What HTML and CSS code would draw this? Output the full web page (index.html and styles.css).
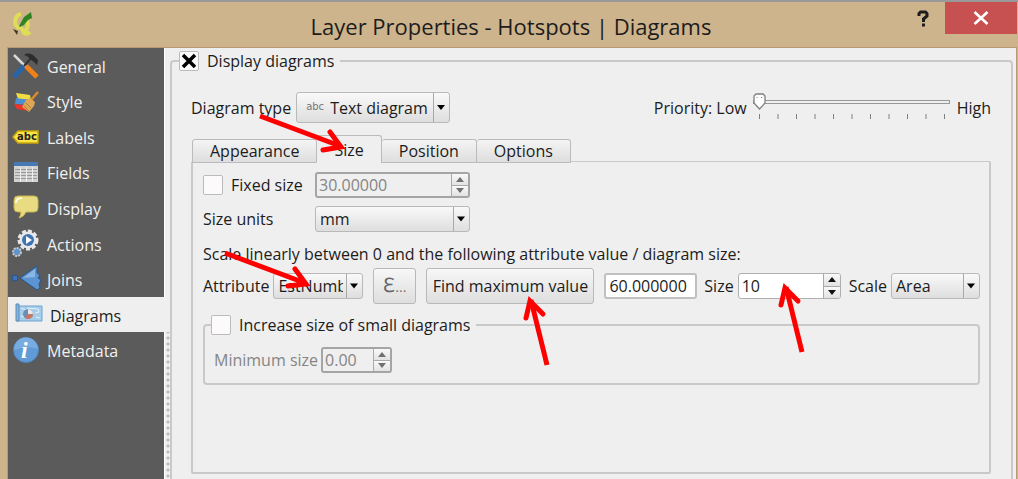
FILE: index.html
```html
<!DOCTYPE html>
<html lang="en">
<head>
  <meta charset="utf-8">
  <title>Layer Properties - Hotspots | Diagrams</title>
  <link rel="stylesheet" href="styles.css">
</head>
<body>
  <div class="window">
    <header class="titlebar">
      <svg class="logo" width="22" height="26" viewBox="0 0 22 26">
        <path d="M9 3C4 4 2 9 4 15M15 10c2 4 0 9-3 11M4 17c4-2 6 0 7 3 1 3 4 4 7 1" fill="none" stroke="#dfdc55" stroke-width="4"/>
        <path d="m7 15 5-9 7-5 1 6-4 2-4 5-4 2z" fill="#2f8420"/>
        <path d="m1 18 5 2-1 4z" fill="#3a3a24"/>
      </svg>
      <h1>Layer Properties - Hotspots | Diagrams</h1>
      <div class="window-buttons">
        <button class="help" aria-label="Help">
          <svg width="12" height="17" viewBox="0 0 12 17"><path d="M2 6V3.500L3.500 2h5L10 3.500V6L6.500 9v3M6.500 13.500v3" fill="none" stroke="#1d1d1d" stroke-width="3"/></svg>
        </button>
        <button class="close" aria-label="Close">
          <svg width="16" height="14" viewBox="0 0 16 14"><path d="m1.500 1 13 12m0-12-13 12" stroke="#fff" stroke-width="2.600"/></svg>
        </button>
      </div>
    </header>

    <div class="content">
      <nav class="sidebar">
        <a href="#general">
          <svg width="28" height="28" viewBox="0 0 28 28">
            <path d="m2 2 12 12" stroke="#d9d9d9" stroke-width="2.500"/>
            <path d="m2 24 10-11" stroke="#2a64a8" stroke-width="5"/>
            <path d="m12 13 8-9" stroke="#333" stroke-width="2"/>
            <path d="M12 2c4-3 8-1 10 1l4 4-1 5-3-3-4-3c-1-2-3-3-6-4z" fill="#2c2c2c"/>
            <path d="m14 13 11 11" stroke="#f08018" stroke-width="5"/>
          </svg>General</a>
        <a href="#style">
          <svg width="28" height="28" viewBox="0 0 28 28">
            <path d="m4 5 14 2 1 5-13-1z" fill="#f1dc41"/>
            <path d="m4 10 14 2v5L3 16z" fill="#4d8fd0"/>
            <path d="m2 16 9 1 6 6-12-2z" fill="#f0322a"/>
            <path d="m19 12 7-8" stroke="#d98b2c" stroke-width="2.500"/>
            <path d="m14 12 4-2 5 4-1 4-5 6-7-5z" fill="#dda556"/>
            <path d="m12 18 5 5m-3-8 5 5" stroke="#b87c2f"/>
          </svg>Style</a>
        <a href="#labels">
          <svg width="28" height="28" viewBox="0 0 28 28">
            <path d="m1 13 5-6h20v12H6z" fill="#fbe545" stroke="#c9a60b" stroke-width="1.500"/>
            <text x="5" y="16" class="tag-text">abc</text>
          </svg>Labels</a>
        <a href="#fields">
          <svg width="28" height="28" viewBox="0 0 28 28">
            <path d="M2 3h24v20H2z" fill="#d2d2d2"/>
            <path d="M2 3h24v4H2z" fill="#4779b6"/>
            <path d="M3 10.500h22M3 13.500h22M3 16.500h22M3 19.500h22" stroke="#999"/>
            <path d="M8.500 8v15M14.500 8v15M20.500 8v15" stroke="#eee"/>
          </svg>Fields</a>
        <a href="#display">
          <svg width="28" height="28" viewBox="0 0 28 28">
            <path d="M6 1h16q4 0 4 4v8q0 4-4 4h-8q-2 5-7 6 2-3 2-6H6q-4 0-4-4V5q0-4 4-4z" fill="#e8db81" stroke="#c9b74c"/>
            <path d="M4 8q0-5 6-5" fill="none" stroke="#fffbe0" stroke-width="2"/>
          </svg>Display</a>
        <a href="#actions">
          <svg width="28" height="28" viewBox="0 0 28 28">
            <circle cx="16" cy="9" r="9" fill="none" stroke="#e8e8e8" stroke-width="3" stroke-dasharray="4 2"/>
            <circle cx="16" cy="9" r="8.500" fill="#e8e8e8"/>
            <circle cx="16" cy="9" r="6" fill="#3e74b5"/>
            <path d="m14 5 6 4-6 4z" fill="#fff"/>
            <circle cx="5" cy="21" r="4" fill="#5f93cc" stroke="#c9c9c9" stroke-dasharray="2 1" stroke-width="2"/>
          </svg>Actions</a>
        <a href="#joins">
          <svg width="28" height="28" viewBox="0 0 28 28">
            <circle cx="3" cy="12" r="3" fill="#3f74b8" stroke="#254f88"/>
            <path d="M8 12 25 0v7l3 2-2 3 3 2-2 4 1 4-3 2z" fill="#5b94d0" stroke="#28548e"/>
            <path d="m11 12 12-9v8z" fill="#8ab6e3"/>
          </svg>Joins</a>
        <a href="#diagrams" class="selected">
          <svg width="28" height="28" viewBox="0 0 28 28">
            <path d="M2 4h25v15H2z" fill="#a6cdea" stroke="#6ea5d0"/>
            <path d="M1 2h3v17H1z" fill="#84b4dc" stroke="#578cbb"/>
            <path d="m6 6 5 2 2-2 10 1 1 3-4 1M6 14l4 1 2 2m9-2 4 1" fill="none" stroke="#e1f1fa"/>
            <circle cx="13" cy="12" r="5" fill="#6c8eb4"/>
            <path d="M13 12V7a5 5 0 0 1 5 5z" fill="#e6e8ea"/>
            <path d="M13 12h5a5 5 0 0 1-8 4z" fill="#c77761"/>
          </svg>Diagrams</a>
        <a href="#metadata">
          <svg width="28" height="28" viewBox="0 0 28 28">
            <circle cx="14" cy="13" r="12.500" fill="#609bd8" stroke="#4d87c4"/>
            <path d="M2 13a12 12 0 0 1 24-1q-10-4-24 1z" fill="#78abdf"/>
            <text x="9" y="21" class="info-text">i</text>
          </svg>Metadata</a>
      </nav>
      <div class="splitter"></div>

      <main>
        <fieldset class="group display-group">
          <legend><label><input type="checkbox" checked>Display diagrams</label></legend>

          <div class="row type-row">
            <label for="type">Diagram type</label>
            <span class="type-select">
              <span class="abc">abc</span>
              <select id="type" class="tall"><option>Text diagram</option></select>
            </span>
            <div class="priority">
              <label for="priority">Priority: Low</label>
              <input type="range" id="priority" min="0" max="10" value="0">
              <span>High</span>
            </div>
          </div>

          <div class="tabs" role="tablist">
            <button role="tab">Appearance</button>
            <button role="tab" class="active" aria-selected="true">Size</button>
            <button role="tab">Position</button>
            <button role="tab">Options</button>
          </div>

          <section class="tab-panel">
            <div class="form">
              <label><input type="checkbox" id="fixed">Fixed size</label>
              <div class="spin disabled">
                <input type="number" value="30.00000" step="any" aria-label="Fixed size" disabled>
                <div class="steps"><button class="up" aria-label="Increase" disabled></button><button class="down" aria-label="Decrease" disabled></button></div>
              </div>
              <label for="units">Size units</label>
              <select id="units"><option>mm</option></select>
            </div>

            <p>Scale linearly between 0 and the following attribute value / diagram size:</p>

            <div class="row attribute-row">
              <label for="attribute">Attribute</label>
              <select id="attribute"><option>EstNumber</option></select>
              <button class="push expression" aria-label="Expression">&#x2107;<small>...</small></button>
              <button class="push find">Find maximum value</button>
              <input type="text" class="maximum" value="60.000000" aria-label="Maximum value">
              <label for="size">Size</label>
              <div class="spin size">
                <input type="number" id="size" value="10">
                <div class="steps"><button class="up" aria-label="Increase"></button><button class="down" aria-label="Decrease"></button></div>
              </div>
              <label for="scale" class="scale-label">Scale</label>
              <select id="scale"><option>Area</option></select>
            </div>

            <fieldset class="group small-group">
              <legend><label><input type="checkbox">Increase size of small diagrams</label></legend>
              <div class="row muted">
                <label for="minimum">Minimum size</label>
                <div class="spin minimum disabled">
                  <input type="number" id="minimum" value="0.00" step="any" disabled>
                  <div class="steps"><button class="up" aria-label="Increase" disabled></button><button class="down" aria-label="Decrease" disabled></button></div>
                </div>
              </div>
            </fieldset>
          </section>
        </fieldset>
      </main>
    </div>

    <svg class="arrows" width="1018" height="479" viewBox="0 0 1018 479">
      <path d="M260 116 340 146"/>
      <path class="head" d="m330 132 11 15-18 3"/>
      <path d="m225 253 80 30"/>
      <path class="head" d="m295 269 11 15-18 2"/>
      <path d="m547 365-16-65"/>
      <path class="head" d="m526 318 4-17 13 13"/>
      <path d="m802 352-16-65"/>
      <path class="head" d="m781 305 4-17 13 13"/>
    </svg>
  </div>
</body>
</html>
```
FILE: styles.css
```css
* {
  box-sizing: border-box;
}

body {
  margin: 0;
  background: #efefef;
  color: #1c1c1c;
  font: 16px/20px "Open Sans", sans-serif;
}

input, select, button {
  font: inherit;
  color: inherit;
}

.window {
  position: relative;
  display: flex;
  flex-direction: column;
  min-height: 100vh;
  background: #ceb48c;
  border-top: 2px solid #999;
}

/* title bar */
.titlebar {
  display: grid;
  grid-template-columns: 120px 1fr 120px;
  height: 46px;
}

.logo {
  margin: 9px 0 0 12px;
}

h1 {
  margin: 8px 0 0;
  padding-left: 4px;
  font-size: 22px;
  font-weight: normal;
  line-height: 32px;
  text-align: center;
}

.window-buttons {
  display: flex;
  justify-content: flex-end;
  align-items: flex-start;
  padding-right: 1px;
}

.window-buttons button {
  display: flex;
  justify-content: center;
  align-items: center;
  height: 32px;
  padding: 0;
  border: none;
  background: none;
}

.window-buttons .help {
  width: 44px;
}

.window-buttons .close {
  width: 72px;
  background: #c75050;
}

.content {
  flex: 1;
  display: flex;
  margin: 0 2px 0 8px;
  background: #efefef;
  box-shadow: 0 0 0 1px #b99a72;
}

/* page list */
.sidebar {
  display: grid;
  grid-template-rows: repeat(9, 1fr);
  width: 156px;
  height: 320px;
  background: #5b5b5b;
  box-shadow: 0 200px #5b5b5b;
  clip-path: inset(0 -1px -200px 0);
}

.sidebar a {
  display: flex;
  align-items: center;
  gap: 7px;
  padding: 2px 0 0 4px;
  color: #f0f0f0;
  text-decoration: none;
}

.sidebar svg {
  overflow: visible;
}

.sidebar a.selected {
  margin-right: -1px;
  padding-left: 7px;
  background: #efefef;
  color: #1c1c1c;
}

.tag-text {
  font: bold 10px "DejaVu Sans", sans-serif;
  fill: #222;
}

.info-text {
  font: italic bold 24px "Liberation Serif", serif;
  fill: #fff;
}

.splitter {
  width: 6px;
  border-left: 1px solid #fff;
  background: radial-gradient(circle at 2px 2px, #bbb 1px, transparent 2px) 1px 0 / 4px 6px repeat-y;
}

.splitter::before {
  content: "";
  display: block;
  height: 284px;
  background: #efefef;
}

main {
  flex: 1;
  display: flex;
  padding: 3px 3px 0 0;
}

/* group boxes */
.group {
  margin: 0;
  border: 2px solid #c9c9c9;
  border-radius: 4px;
}

.group legend {
  padding: 0 6px 0 0;
}

.group legend label,
.form label {
  display: flex;
  align-items: center;
  gap: 8px;
}

.display-group {
  flex: 1;
  min-width: 0;
  padding: 0 20px 6px 19px;
  border-bottom: none;
  border-bottom-left-radius: 0;
  border-bottom-right-radius: 0;
}

.display-group > legend {
  margin-left: -12px;
}

.row {
  display: flex;
  align-items: center;
}

input[type="checkbox"] {
  appearance: none;
  width: 20px;
  height: 20px;
  margin: 0;
  border: 1px solid #bbb;
  border-radius: 2px;
  background: #fcfafa;
}

input[type="checkbox"]:checked {
  background: #fcfafa url('data:image/svg+xml,<svg xmlns="http://www.w3.org/2000/svg" width="18" height="18"><path d="M3 3 15 15M15 3 3 15" stroke="black" stroke-width="3.500"/></svg>');
}

select {
  appearance: none;
  height: 26px;
  padding: 0 19px 0 4px;
  border: 1px solid #b9b9b9;
  border-radius: 3px;
  background:
    url('data:image/svg+xml,<svg xmlns="http://www.w3.org/2000/svg" width="16" height="29"><path d="M.500 0V29" stroke="darkgray"/><path d="M4 12h8l-4 5z"/></svg>') right center no-repeat,
    linear-gradient(#f9f9f9, #dedede);
}

.type-row {
  gap: 5px;
  margin-top: 21px;
}

.type-select {
  position: relative;
}

.abc {
  position: absolute;
  left: 10px;
  top: 5px;
  color: #777;
  font: 10px/20px "DejaVu Sans", sans-serif;
}

select.tall {
  display: block;
  width: 154px;
  height: 31px;
  padding-left: 33px;
}

.priority {
  display: flex;
  align-items: center;
  gap: 6px;
  margin-left: auto;
}

input[type="range"] {
  appearance: none;
  width: 198px;
  height: 28px;
  margin: 0;
  background:
    linear-gradient(#efefef, #efefef) 1px 7px / 195px 2px no-repeat,
    linear-gradient(#999, #999) 0 6px / 197px 4px no-repeat,
    url('data:image/svg+xml,<svg xmlns="http://www.w3.org/2000/svg" width="198" height="28"><path d="M6.500 20V25M25 20V25M43.500 20V25M62 20V25M80.500 20V25M99 20V25M117.500 20V25M136 20V25M154.500 20V25M173 20V25M191.500 20V25" stroke="gray"/></svg>');
}

input[type="range"]::-webkit-slider-thumb {
  appearance: none;
  width: 13px;
  height: 17px;
  margin-top: -13px;
  background: url('data:image/svg+xml,<svg xmlns="http://www.w3.org/2000/svg" width="13" height="17"><path d="M3 1h7l2 2v7l-5.500 6L1 10V3z" fill="white" stroke="gray" stroke-width="1.300"/><path d="M3.500 4.500h1M8 4.500h1" stroke="gray"/></svg>');
}

/* tabs */
.tabs {
  display: flex;
  align-items: flex-end;
  margin: 12px 0 -2px 1px;
}

.tabs button {
  height: 24px;
  padding: 0 17px;
  border: 1px solid #bbb;
  border-left-width: 0;
  border-radius: 3px 3px 0 0;
  background: linear-gradient(#f4f4f4, #dedede);
  line-height: 20px;
}

.tabs button:first-child {
  border-left-width: 1px;
}

.tabs button.active {
  position: relative;
  height: 28px;
  border-bottom: none;
  background: #efefef;
}

.tab-panel {
  height: 313px;
  padding: 10px 9px 9px 10px;
  border: 2px solid #c9c9c9;
  border-top-width: 1px;
  border-radius: 2px;
}

.form {
  display: grid;
  grid-template-columns: 104px 155px;
  gap: 8px;
}

p {
  margin: 12px 0 4px;
}

/* spin boxes */
.spin {
  display: flex;
  height: 26px;
  border: 1px solid #b0b0b0;
  border-radius: 3px;
  background: #fff;
  overflow: hidden;
}

.spin input {
  appearance: textfield;
  flex: 1;
  width: 0;
  min-width: 0;
  padding: 0 3px;
  border: none;
  background: none;
}

.spin input::-webkit-inner-spin-button {
  appearance: none;
}

.spin.disabled {
  border: 2px solid #a5a5a5;
  background: #efefef;
}

.spin.disabled input,
.muted {
  color: #858585;
}

.spin.disabled input {
  padding: 0 2px;
}

.steps {
  display: flex;
  flex-direction: column;
  width: 17px;
  border-left: 1px solid #aaa;
}

.steps button {
  flex: 1;
  display: flex;
  align-items: center;
  justify-content: center;
  padding: 0;
  border: none;
  background: linear-gradient(#f9f9f9, #e2e2e2);
}

.steps .down {
  border-top: 1px solid #aaa;
}

.steps button::before {
  content: "";
  border: 4px solid transparent;
  border-top: none;
  border-bottom: 5px solid #111;
}

.steps .down::before {
  transform: rotate(180deg);
}

.steps button:disabled::before {
  border-bottom-color: #707070;
}

/* attribute line */
.attribute-row {
  gap: 4px;
}

#attribute {
  width: 90px;
}

.push {
  height: 36px;
  padding: 0 5px;
  border: 1px solid #b9b9b9;
  border-radius: 3px;
  background: linear-gradient(#f7f7f7, #dedede);
  white-space: nowrap;
}

.expression {
  width: 43px;
  margin: 0 6px;
  color: #666;
  font: 20px/20px "DejaVu Serif", serif;
}

.expression small {
  font-size: 12px;
}

.find {
  width: 168px;
}

.maximum {
  flex: 1;
  width: 0;
  height: 26px;
  margin: 0 3px 0 6px;
  padding: 0 3px;
  border: 2px solid #c0c0c0;
  border-radius: 3px;
  background: #fff;
}

.spin.size {
  width: 103px;
}

.scale-label {
  margin-left: 4px;
}

#scale {
  width: 89px;
}

.small-group {
  margin-top: 11px;
  padding: 12px 9px 10px;
}

.small-group legend {
  margin-left: -3px;
}

.small-group .row {
  gap: 3px;
}

.spin.minimum {
  width: 71px;
}

/* pointer arrows over the dialog */
.arrows {
  position: absolute;
  left: 0;
  top: -2px;
  z-index: 2;
  fill: none;
  stroke: #fe0000;
  stroke-width: 5;
  pointer-events: none;
}

.arrows .head {
  stroke-linecap: round;
}
```
